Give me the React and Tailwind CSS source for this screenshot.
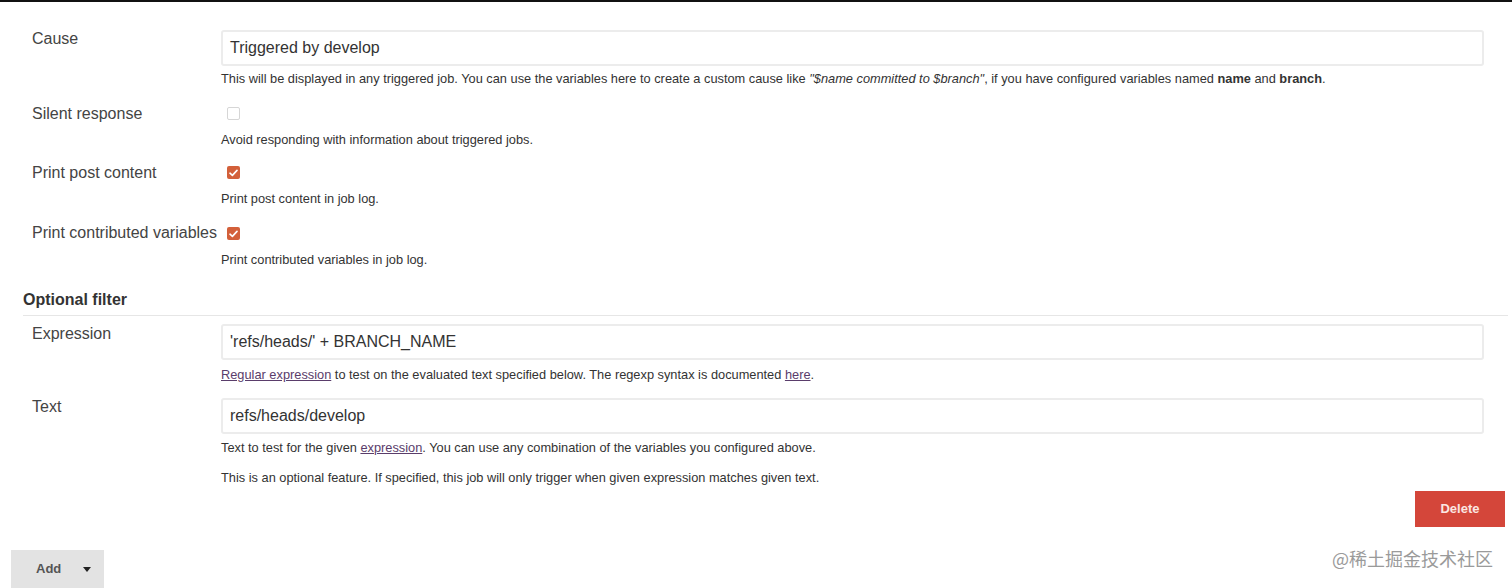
import React from "react";

const font = { fontFamily: '"Liberation Sans", Arial, sans-serif' };

function Checkbox({ checked }) {
  if (checked) {
    return (
      <div className="w-[13px] h-[13px] rounded-[2px] bg-[#d3603a] flex items-center justify-center">
        <svg width="9" height="8" viewBox="0 0 9 8">
          <path d="M1 4.2 L3.4 6.4 L8 1.4" fill="none" stroke="#ffffff" strokeWidth="1.6" strokeLinecap="round" strokeLinejoin="round" />
        </svg>
      </div>
    );
  }
  return <div className="w-[13px] h-[13px] rounded-[2px] border border-[#d6d6d6] bg-white" />;
}

function Input({ value }) {
  return (
    <div className="h-[36px] w-[1263px] rounded-[3px] border-2 border-[#ececec] bg-white flex items-center pl-[7px] text-[16px] text-[#333]">
      {value}
    </div>
  );
}

function Label({ children }) {
  return <div className="w-[198px] pl-[9px] text-[16px] leading-[20px] text-[#444] shrink-0">{children}</div>;
}

const help = "text-[12.8px] leading-[16px] text-[#333] whitespace-nowrap";

export default function App() {
  return (
    <div className="w-[1512px] h-[588px] bg-white overflow-hidden relative" style={font}>
      <div className="h-[2px] bg-[#111]" />
      <div className="pl-[23px]">
        {/* Cause */}
        <div className="flex mt-[27px]">
          <Label>Cause</Label>
          <div>
            <div className="mt-[1px]">
              <Input value="Triggered by develop" />
            </div>
            <div className={`${help} mt-[5px]`}>
              This will be displayed in any triggered job. You can use the variables here to create a custom cause like{" "}
              <i>"$name committed to $branch"</i>, if you have configured variables named <b>name</b> and <b>branch</b>.
            </div>
          </div>
        </div>

        {/* Silent response */}
        <div className="flex mt-[17px]">
          <Label>Silent response</Label>
          <div className="pl-[6px]">
            <div className="mt-[3px]">
              <Checkbox />
            </div>
          </div>
        </div>
        <div className={`${help} ml-[198px] mt-[8px]`}>Avoid responding with information about triggered jobs.</div>

        {/* Print post content */}
        <div className="flex mt-[15px]">
          <Label>Print post content</Label>
          <div className="pl-[6px]">
            <div className="mt-[3px]">
              <Checkbox checked />
            </div>
          </div>
        </div>
        <div className={`${help} ml-[198px] mt-[8px]`}>Print post content in job log.</div>

        {/* Print contributed variables */}
        <div className="flex mt-[16px]">
          <Label>Print contributed variables</Label>
          <div className="pl-[6px]">
            <div className="mt-[4px]">
              <Checkbox checked />
            </div>
          </div>
        </div>
        <div className={`${help} ml-[198px] mt-[9px]`}>Print contributed variables in job log.</div>

        {/* Optional filter */}
        <div className="mt-[22px] mr-[4px] border-b border-[#e6e6e6] pb-[5px] text-[16px] leading-[20px] font-bold text-[#333]">
          Optional filter
        </div>

        {/* Expression */}
        <div className="flex mt-[8px]">
          <Label>Expression</Label>
          <div>
            <Input value="'refs/heads/' + BRANCH_NAME" />
            <div className={`${help} mt-[7px]`}>
              <span className="underline text-[#5a3d6b]">Regular expression</span> to test on the evaluated text specified below. The regexp syntax is documented{" "}
              <span className="underline text-[#5a3d6b]">here</span>.
            </div>
          </div>
        </div>

        {/* Text */}
        <div className="flex mt-[14px]">
          <Label>Text</Label>
          <div>
            <div className="mt-[1px]">
              <Input value="refs/heads/develop" />
            </div>
            <div className={`${help} mt-[6px]`}>
              Text to test for the given <span className="underline text-[#5a3d6b]">expression</span>. You can use any combination of the variables you configured above.
            </div>
            <div className={`${help} mt-[14px]`}>
              This is an optional feature. If specified, this job will only trigger when given expression matches given text.
            </div>
          </div>
        </div>

        {/* Delete */}
        <div className="flex justify-end pr-[7px] mt-[5px]">
          <div className="w-[90px] h-[36px] bg-[#d4463a] text-[#fbe6e2] text-[13px] font-bold flex items-center justify-center">
            Delete
          </div>
        </div>
      </div>

      {/* Add */}
      <div className="flex items-start justify-between mt-[23px] pl-[11px] pr-[19px]">
        <div className="w-[93px] h-[38px] bg-[#e3e3e3] flex items-center pl-[25px] text-[13px] font-bold text-[#555]">
          <span>Add</span>
          <svg className="ml-[22px]" width="8" height="5" viewBox="0 0 8 5">
            <path d="M0 0 L8 0 L4 5 Z" fill="#222" />
          </svg>
        </div>
        <div
          className="text-[18px] leading-[26px] text-[#9a9a9a] -mt-[5px]"
          style={{ fontFamily: '"Noto Sans CJK SC", "Liberation Sans", sans-serif' }}
        >
          @稀土掘金技术社区
        </div>
      </div>
    </div>
  );
}
